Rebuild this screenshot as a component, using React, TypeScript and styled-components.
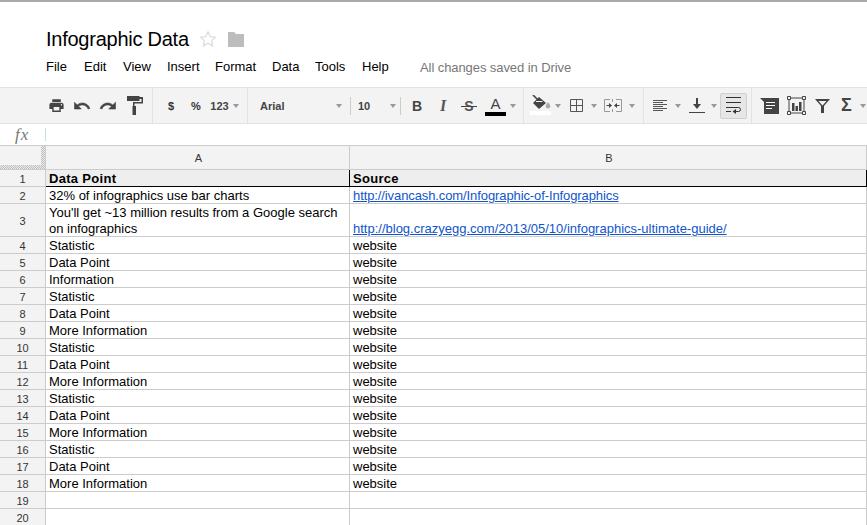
import React from "react";
import styled, { createGlobalStyle } from "styled-components";

const Global = createGlobalStyle`
  html, body { margin: 0; padding: 0; background: #fff; overflow: hidden; }
  body { font-family: "Liberation Sans", Arial, sans-serif; }
`;

const Page = styled.div`
  width: 867px;
  height: 525px;
  overflow: hidden;
  border-top: 2px solid #a9a9a9;
  box-sizing: border-box;
`;

const Header = styled.header`
  height: 85px;
  box-sizing: border-box;
  padding: 23px 0 0 46px;
`;

const TitleRow = styled.div`
  display: flex;
  align-items: center;
  height: 28px;
`;

const Title = styled.h1`
  margin: 0;
  font-size: 20px;
  font-weight: 400;
  letter-spacing: -0.25px;
  color: #000;
  line-height: 28px;
`;

const StarIcon = styled.svg`
  width: 18px;
  height: 18px;
  margin-left: 10px;
`;

const FolderIcon = styled.svg`
  width: 18px;
  height: 16px;
  margin-left: 10px;
`;

const MenuBar = styled.nav`
  display: flex;
  align-items: center;
  height: 18px;
  margin-top: 5px;
  font-size: 13px;
  color: #000;
`;

const MenuItem = styled.span<{ $w: number }>`
  width: ${(p) => p.$w}px;
  flex: none;
  line-height: 18px;
  white-space: nowrap;
`;

const SaveStatus = styled.span`
  margin-left: 12px;
  color: #777;
  white-space: nowrap;
  letter-spacing: -0.08px;
`;

const Toolbar = styled.div`
  display: flex;
  height: 37px;
  box-sizing: border-box;
  background: #f3f3f3;
  border-top: 1px solid #e2e2e2;
  border-bottom: 1px solid #e2e2e2;
`;

const Section = styled.div<{ $w: number; $pl: number; $last?: boolean }>`
  display: flex;
  align-items: center;
  flex: none;
  box-sizing: border-box;
  width: ${(p) => p.$w}px;
  padding-left: ${(p) => p.$pl}px;
  border-right: ${(p) => (p.$last ? "none" : "1px solid #e2e2e2")};
`;

const Tool = styled.div<{ $w: number; $active?: boolean }>`
  display: flex;
  align-items: center;
  justify-content: center;
  flex: none;
  box-sizing: border-box;
  width: ${(p) => p.$w}px;
  height: 26px;
  color: #444;
  ${(p) =>
    p.$active
      ? "background: #e6e6e6; border: 1px solid #cfcfcf; border-radius: 2px;"
      : ""}
`;

const CurrencyText = styled.span`
  font-size: 11px;
  font-weight: 700;
  color: #333;
`;

const NumberText = styled.span`
  font-size: 11px;
  font-weight: 700;
  color: #444;
`;

const Caret = styled.i<{ $w?: number }>`
  display: flex;
  justify-content: center;
  flex: none;
  width: ${(p) => p.$w ?? 14}px;
  &::before {
    content: "";
    border: 3px solid transparent;
    border-top: 4px solid #999;
    border-bottom: 0;
  }
`;

const Select = styled.div<{ $w: number; $pr: number }>`
  display: flex;
  align-items: center;
  flex: none;
  box-sizing: border-box;
  width: ${(p) => p.$w}px;
  height: 18px;
  padding-right: ${(p) => p.$pr}px;
  border-right: 1px solid #ccc;
  font-size: 11px;
  font-weight: 700;
  color: #444;
`;

const SelectLabel = styled.span<{ $indent?: number }>`
  margin-left: ${(p) => p.$indent ?? 0}px;
  margin-right: auto;
`;

const BoldLetter = styled.span`
  font-size: 14px;
  font-weight: 700;
  color: #444;
`;

const ItalicLetter = styled.span`
  font-family: "Liberation Serif", serif;
  font-size: 16px;
  font-weight: 700;
  font-style: italic;
  color: #555;
`;

const StrikeLetter = styled.span`
  position: relative;
  font-size: 14px;
  font-weight: 700;
  color: #555;
  &::after {
    content: "";
    position: absolute;
    left: -3px;
    right: -3px;
    top: 8px;
    height: 1px;
    background: #444;
  }
`;

const ColorLetter = styled.div<{ $bar: string }>`
  display: flex;
  flex-direction: column;
  align-items: center;
  width: 21px;
  font-size: 15px;
  line-height: 15px;
  color: #444;
  &::after {
    content: "";
    display: block;
    width: 21px;
    height: 4px;
    margin-top: 1px;
    background: ${(p) => p.$bar};
  }
`;

const Sigma = styled.span`
  font-size: 18px;
  font-weight: 700;
  color: #444;
`;

const FormulaBar = styled.div`
  display: flex;
  align-items: center;
  height: 21px;
  box-sizing: border-box;
  padding-left: 15px;
`;

const FxLabel = styled.span`
  width: 30px;
  font-family: "Liberation Serif", serif;
  font-style: italic;
  font-size: 17px;
  letter-spacing: 1px;
  color: #777;
  line-height: 20px;
`;

const FormulaCursor = styled.span`
  width: 1px;
  height: 13px;
  background: #c4e6cc;
`;

const Sheet = styled.div`
  border-top: 1px solid #ccc;
`;

const Row = styled.div<{ $h: number }>`
  display: grid;
  grid-template-columns: 46px 304px 517px;
  height: ${(p) => p.$h}px;
`;

const Corner = styled.div`
  display: grid;
  grid-template-columns: 41px 4px;
  grid-template-rows: 19px 4px;
  background: #f3f3f3;
  border-right: 1px solid #ccc;
  border-bottom: 1px solid #ccc;
`;

const Hatch = styled.div<{ $side: "right" | "bottom" }>`
  background: repeating-conic-gradient(#bdbdbd 0 25%, #ececec 0 50%) 0 0 / 2px 2px;
  ${(p) =>
    p.$side === "right"
      ? "grid-column: 2; grid-row: 1 / span 2;"
      : "grid-column: 1; grid-row: 2;"}
`;

const ColHead = styled.div`
  display: flex;
  align-items: center;
  justify-content: center;
  box-sizing: border-box;
  padding-left: 2px;
  background: #f3f3f3;
  border-right: 1px solid #ccc;
  border-bottom: 1px solid #ccc;
  font-size: 11px;
  color: #333;
`;

const RowHead = styled.div`
  display: flex;
  align-items: center;
  justify-content: center;
  box-sizing: border-box;
  padding: 1px 0 0 0;
  background: #f3f3f3;
  border-right: 1px solid #ccc;
  border-bottom: 1px solid #ccc;
  font-size: 11px;
  color: #333;
`;

const Cell = styled.div<{ $head?: boolean }>`
  display: flex;
  align-items: flex-end;
  box-sizing: border-box;
  padding: 0 3px;
  font-size: 13px;
  line-height: 16px;
  color: #000;
  overflow: hidden;
  border-right: 1px solid ${(p) => (p.$head ? "#000" : "#ccc")};
  border-bottom: 1px solid ${(p) => (p.$head ? "#000" : "#ccc")};
  background: ${(p) => (p.$head ? "#eeeeee" : "#fff")};
  font-weight: ${(p) => (p.$head ? 700 : 400)};
  letter-spacing: ${(p) => (p.$head ? "0.3px" : "normal")};
`;

const CellText = styled.span`
  display: block;
  margin-bottom: -1px;
`;

const CellLink = styled.a<{ $tight?: boolean }>`
  color: #1155cc;
  text-decoration: underline;
  white-space: nowrap;
  letter-spacing: ${(p) => (p.$tight ? "-0.1px" : "normal")};
`;

const I = styled.svg<{ $w: number; $h: number }>`
  width: ${(p) => p.$w}px;
  height: ${(p) => p.$h}px;
  display: block;
  flex: none;
`;

const PrintIcon = () => (
  <I $w={17} $h={17} viewBox="0 0 24 24" fill="#444">
    <path d="M19 8H5c-1.66 0-3 1.34-3 3v6h4v4h12v-4h4v-6c0-1.66-1.34-3-3-3zm-3 11H8v-5h8v5zm3-7c-.55 0-1-.45-1-1s.45-1 1-1 1 .45 1 1-.45 1-1 1zm-1-9H6v4h12V3z" />
  </I>
);
const UndoIcon = ({ flip }: { flip?: boolean }) => (
  <I $w={18} $h={18} viewBox="0 0 24 24" fill="#444" stroke="#444" strokeWidth="0.8">
    <path
      transform={flip ? "matrix(-1 0 0 1 24 0)" : undefined}
      d="M12.5 8c-2.65 0-5.05.99-6.9 2.6L2 7v9h9l-3.62-3.62c1.39-1.16 3.16-1.88 5.12-1.88 3.54 0 6.55 2.31 7.6 5.5l2.37-.78C21.08 11.03 17.15 8 12.5 8z"
    />
  </I>
);
const PaintIcon = () => (
  <I $w={16} $h={19} viewBox="0 0 16 19" fill="#444">
    <path d="M0 0h12.5v5H0zM12.5 1H16v6.5H7.5V10H9v9H5.5v-9H6V6h8.5V3h-2z" />
  </I>
);
const FillIcon = () => (
  <I $w={21} $h={22} viewBox="0 0 21 22">
    <path d="M3 0l6 6" stroke="#444" strokeWidth="1.6" />
    <path d="M3 8l6-6 7 6-7 6z" fill="#444" />
    <path d="M6 6.500h6.500" stroke="#f3f3f3" />
    <path d="M18 7c1.500 2.200 2.300 3.200 2.300 4.300a2.300 2.300 0 0 1-4.600 0c0-1.100.8-2.100 2.300-4.300z" fill="#aaa" />
    <rect x="0" y="16" width="21" height="4" fill="#fff" />
  </I>
);
const BordersIcon = () => (
  <I $w={13} $h={13} viewBox="0 0 13 13" fill="none" stroke="#555">
    <path d="M.5.5h12v12H.5zM6.500.5v12M.5 6.500h12" />
  </I>
);
const MergeIcon = () => (
  <I $w={18} $h={13} viewBox="0 0 18 13" fill="none">
    <path d="M6 .5H.5v12H6M12 .5h5.500v12H12M8.500 0v3M8.500 10v3" stroke="#999" />
    <path d="M2.500 6.500h3M15.500 6.500h-3" stroke="#444" />
    <path d="M8 6.500l-3-2.500v5zM10 6.500l3-2.500v5z" fill="#444" />
  </I>
);
const AlignIcon = () => (
  <I $w={14} $h={12} viewBox="0 0 14 12" stroke="#555">
    <path d="M0 .5h14M0 2.500h10M0 4.500h14M0 6.500h10M0 8.500h14M0 10.500h10" />
  </I>
);
const VAlignIcon = () => (
  <I $w={16} $h={15} viewBox="0 0 16 15">
    <path d="M0 14.500h16" stroke="#444" />
    <path d="M7 0h2v6h3l-4 5-4-5h3z" fill="#444" />
  </I>
);
const WrapIcon = () => (
  <I $w={15} $h={17} viewBox="0 0 15 17" fill="none" stroke="#333">
    <path d="M0 .5h15M0 5.500h15M0 10.500h12.500a2 2 0 0 1 0 4H9M0 14.500h5" />
    <path d="M10 12v5l-3.500-2.500z" fill="#333" stroke="none" />
  </I>
);
const CommentIcon = () => (
  <I $w={19} $h={16} viewBox="0 0 19 16">
    <path d="M0 0h19v16H4V4z" fill="#444" />
    <path d="M6 4.500h9M6 7.500h9M6 10.500h6" stroke="#fff" />
  </I>
);
const ChartIcon = () => (
  <I $w={19} $h={19} viewBox="0 0 19 19">
    <path d="M2 2h15v15H2z" fill="none" stroke="#444" />
    <path d="M5 7h2.500v8H5zM8.500 10H11v5H8.500zM12 6h2.500v9H12z" fill="#444" />
    <path d="M.5.5h3v3h-3zM15.500.5h3v3h-3zM.5 15.500h3v3h-3zM15.500 15.500h3v3h-3z" fill="#f3f3f3" stroke="#444" />
  </I>
);
const FilterIcon = () => (
  <I $w={15} $h={15} viewBox="0 0 15 15" fill="#444">
    <path d="M0 1h15L9 8v7H6V8zM3.500 3l4 4.500L11.500 3z" fillRule="evenodd" />
  </I>
);

const rows: [number, string, string][] = [
  [4, "Statistic", "website"],
  [5, "Data Point", "website"],
  [6, "Information", "website"],
  [7, "Statistic", "website"],
  [8, "Data Point", "website"],
  [9, "More Information", "website"],
  [10, "Statistic", "website"],
  [11, "Data Point", "website"],
  [12, "More Information", "website"],
  [13, "Statistic", "website"],
  [14, "Data Point", "website"],
  [15, "More Information", "website"],
  [16, "Statistic", "website"],
  [17, "Data Point", "website"],
  [18, "More Information", "website"],
  [19, "", ""],
  [20, "", ""],
];

const menus: [string, number][] = [
  ["File", 38],
  ["Edit", 39],
  ["View", 44],
  ["Insert", 48],
  ["Format", 57],
  ["Data", 43],
  ["Tools", 47],
  ["Help", 46],
];

export default function App() {
  return (
    <Page>
      <Global />
      <Header>
        <TitleRow>
          <Title>Infographic Data</Title>
          <StarIcon viewBox="0 0 24 24" fill="none" stroke="#dcdcdc" strokeWidth="1.600">
            <path d="M12 2.500l2.900 6.300 6.900.8-5.100 4.700 1.400 6.800-6.100-3.400-6.100 3.400 1.400-6.800-5.100-4.700 6.900-.8z" />
          </StarIcon>
          <FolderIcon viewBox="0 0 18 16" fill="#bdbdbd">
            <path d="M1 1h6l2 2h8v13H1z" />
          </FolderIcon>
        </TitleRow>
        <MenuBar>
          {menus.map(([m, w]) => (
            <MenuItem key={m} $w={w}>
              {m}
            </MenuItem>
          ))}
          <SaveStatus>All changes saved in Drive</SaveStatus>
        </MenuBar>
      </Header>

      <Toolbar>
        <Section $w={153} $pl={43}>
          <Tool $w={26}><PrintIcon /></Tool>
          <Tool $w={26}><UndoIcon /></Tool>
          <Tool $w={26}><UndoIcon flip /></Tool>
          <Tool $w={27}><PaintIcon /></Tool>
        </Section>
        <Section $w={95} $pl={6}>
          <Tool $w={24}><CurrencyText>$</CurrencyText></Tool>
          <Tool $w={26}><CurrencyText>%</CurrencyText></Tool>
          <Tool $w={21}><NumberText>123</NumberText></Tool>
          <Caret $w={12} />
        </Section>
        <Section $w={276} $pl={12}>
          <Select $w={91} $pr={4}>
            <SelectLabel>Arial</SelectLabel>
            <Caret />
          </Select>
          <Select $w={50} $pr={0}>
            <SelectLabel $indent={7}>10</SelectLabel>
            <Caret />
          </Select>
          <Tool $w={32}><BoldLetter>B</BoldLetter></Tool>
          <Tool $w={20}><ItalicLetter>I</ItalicLetter></Tool>
          <Tool $w={32}><StrikeLetter>S</StrikeLetter></Tool>
          <Tool $w={21}><ColorLetter $bar="#000">A</ColorLetter></Tool>
          <Caret />
        </Section>
        <Section $w={120} $pl={6}>
          <Tool $w={21}><FillIcon /></Tool>
          <Caret />
          <Tool $w={22}><BordersIcon /></Tool>
          <Caret />
          <Tool $w={24}><MergeIcon /></Tool>
          <Caret />
        </Section>
        <Section $w={108} $pl={6}>
          <Tool $w={20}><AlignIcon /></Tool>
          <Caret $w={16} />
          <Tool $w={22}><VAlignIcon /></Tool>
          <Caret $w={12} />
          <Tool $w={27} $active><WrapIcon /></Tool>
        </Section>
        <Section $w={115} $pl={4} $last>
          <Tool $w={27}><CommentIcon /></Tool>
          <Tool $w={26}><ChartIcon /></Tool>
          <Tool $w={26}><FilterIcon /></Tool>
          <Tool $w={23}><Sigma>Σ</Sigma></Tool>
          <Caret $w={10} />
        </Section>
      </Toolbar>

      <FormulaBar>
        <FxLabel>fx</FxLabel>
        <FormulaCursor />
      </FormulaBar>

      <Sheet>
        <Row $h={24}>
          <Corner>
            <Hatch $side="right" />
            <Hatch $side="bottom" />
          </Corner>
          <ColHead>A</ColHead>
          <ColHead>B</ColHead>
        </Row>
        <Row $h={17}>
          <RowHead>1</RowHead>
          <Cell $head><CellText>Data Point</CellText></Cell>
          <Cell $head><CellText>Source</CellText></Cell>
        </Row>
        <Row $h={17}>
          <RowHead>2</RowHead>
          <Cell><CellText>32% of infographics use bar charts</CellText></Cell>
          <Cell>
            <CellText>
              <CellLink href="#" $tight>http://ivancash.com/Infographic-of-Infographics</CellLink>
            </CellText>
          </Cell>
        </Row>
        <Row $h={33}>
          <RowHead>3</RowHead>
          <Cell><CellText>You'll get ~13 million results from a Google search on infographics</CellText></Cell>
          <Cell>
            <CellText>
              <CellLink href="#">http://blog.crazyegg.com/2013/05/10/infographics-ultimate-guide/</CellLink>
            </CellText>
          </Cell>
        </Row>
        {rows.map(([n, a, b]) => (
          <Row key={n} $h={17}>
            <RowHead>{n}</RowHead>
            <Cell><CellText>{a}</CellText></Cell>
            <Cell><CellText>{b}</CellText></Cell>
          </Row>
        ))}
      </Sheet>
    </Page>
  );
}
